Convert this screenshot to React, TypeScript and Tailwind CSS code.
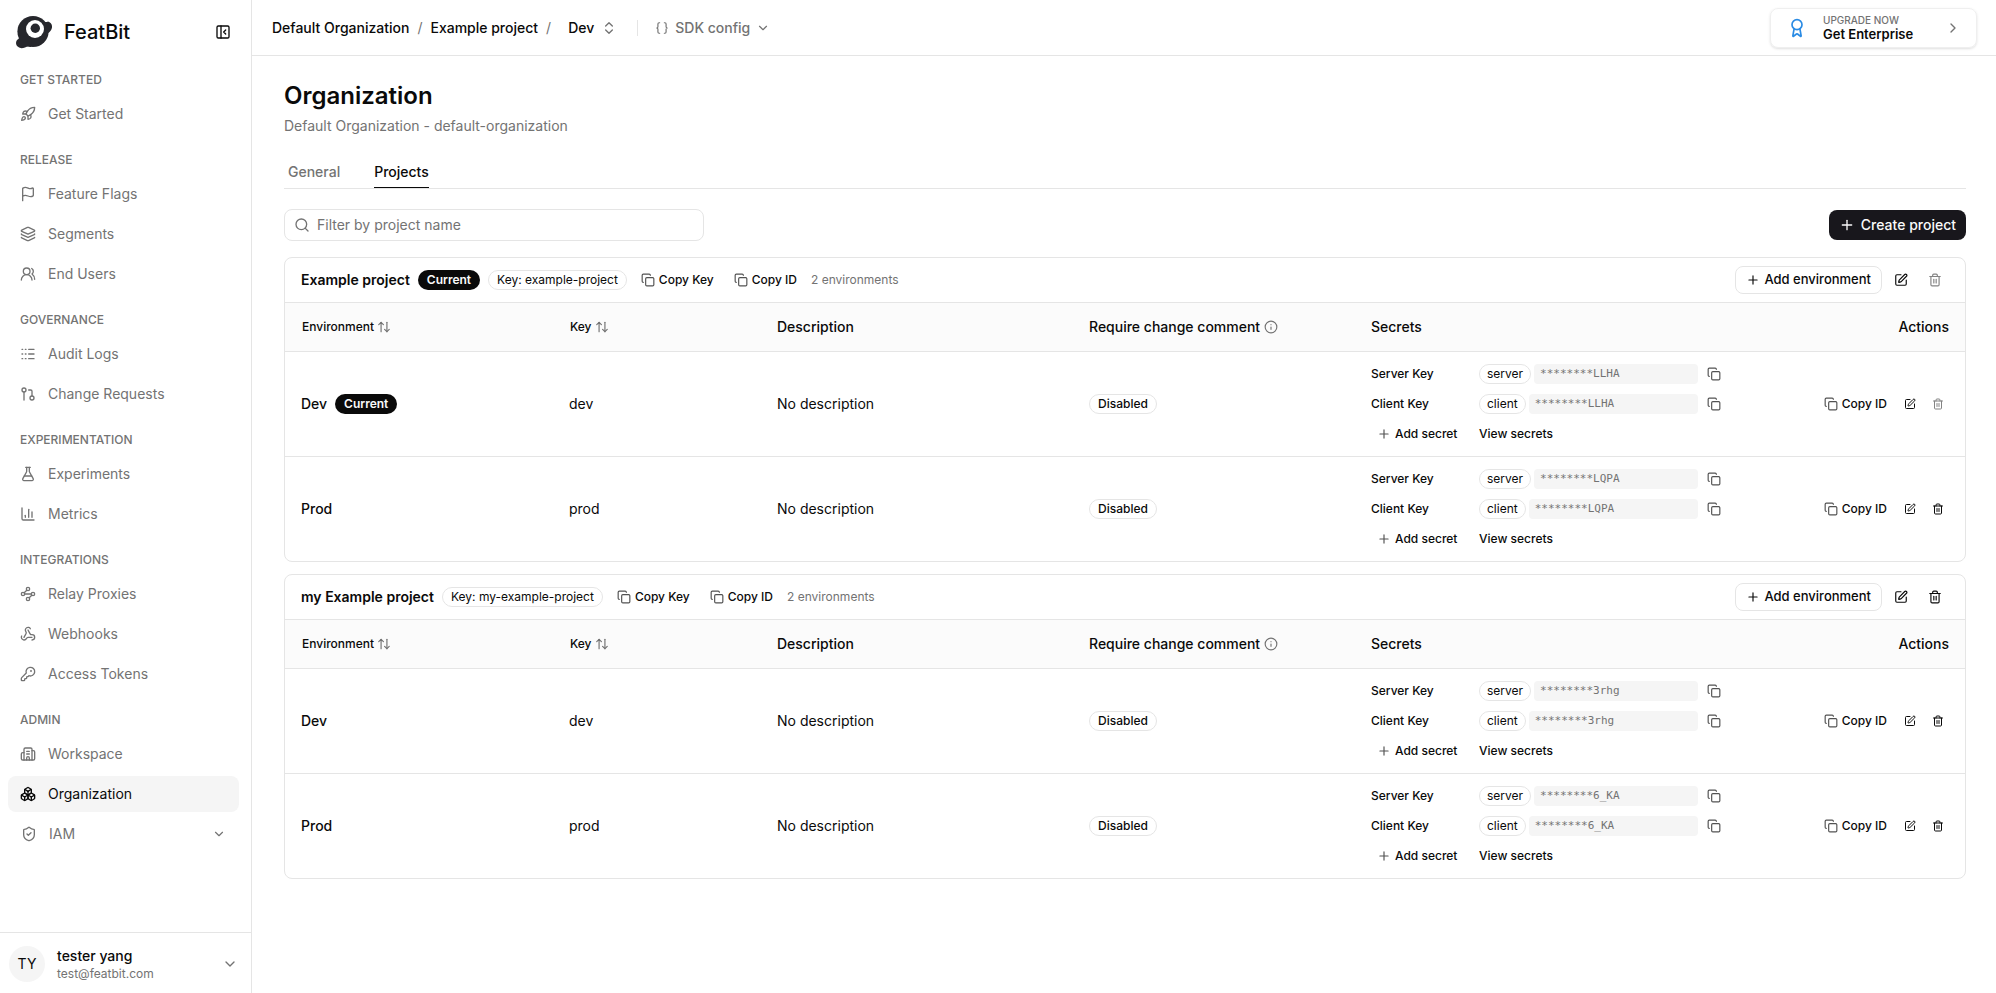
import {
  ArrowUpDown,
  Award,
  Boxes,
  Braces,
  Building2,
  ChartColumn,
  ChevronDown,
  ChevronRight,
  ChevronsUpDown,
  Copy,
  Flag,
  FlaskConical,
  GitPullRequest,
  Info,
  KeyRound,
  Layers,
  Logs,
  PanelLeftClose,
  Plus,
  Rocket,
  Search,
  ShieldCheck,
  SquarePen,
  Trash2,
  UsersRound,
  Waypoints,
  Webhook,
  type LucideIcon,
} from "lucide-react";
import { clsx } from "clsx";

type NavItem = { label: string; icon: LucideIcon; active?: boolean };
type NavSection = { title: string; items: NavItem[] };

const sections: NavSection[] = [
  { title: "Get Started", items: [{ label: "Get Started", icon: Rocket }] },
  {
    title: "Release",
    items: [
      { label: "Feature Flags", icon: Flag },
      { label: "Segments", icon: Layers },
      { label: "End Users", icon: UsersRound },
    ],
  },
  {
    title: "Governance",
    items: [
      { label: "Audit Logs", icon: Logs },
      { label: "Change Requests", icon: GitPullRequest },
    ],
  },
  {
    title: "Experimentation",
    items: [
      { label: "Experiments", icon: FlaskConical },
      { label: "Metrics", icon: ChartColumn },
    ],
  },
  {
    title: "Integrations",
    items: [
      { label: "Relay Proxies", icon: Waypoints },
      { label: "Webhooks", icon: Webhook },
      { label: "Access Tokens", icon: KeyRound },
    ],
  },
  {
    title: "Admin",
    items: [
      { label: "Workspace", icon: Building2 },
      { label: "Organization", icon: Boxes, active: true },
    ],
  },
];

type Environment = { name: string; key: string; secret: string; current?: boolean };
type Project = { name: string; key: string; current?: boolean; envs: Environment[] };

const projects: Project[] = [
  {
    name: "Example project",
    key: "example-project",
    current: true,
    envs: [
      { name: "Dev", key: "dev", secret: "********LLHA", current: true },
      { name: "Prod", key: "prod", secret: "********LQPA" },
    ],
  },
  {
    name: "my Example project",
    key: "my-example-project",
    envs: [
      { name: "Dev", key: "dev", secret: "********3rhg" },
      { name: "Prod", key: "prod", secret: "********6_KA" },
    ],
  },
];

function Logo() {
  return (
    <svg viewBox="0 0 36 34" className="h-[34px] w-9" aria-hidden="true">
      <g fill="#26272c">
        <circle cx="17" cy="16.5" r="15.6" />
        <path d="M25 6 Q30 8 32 6.4 Q36.4 7.6 36 12.6 Q35.4 16.4 31.6 18.4 L25 20Z" />
        <path d="M4 20 Q3.4 24 1 25 Q-1 28 1 31 Q4 34.4 9 32.4 Q12 31 15 32 L16 24Z" />
      </g>
      <circle cx="19" cy="14" r="9" fill="#fff" />
      <circle cx="19.3" cy="13.2" r="4.7" fill="#26272c" />
    </svg>
  );
}

function Sidebar() {
  return (
    <aside className="flex w-[252px] shrink-0 flex-col border-r border-neutral-200">
      <div className="flex h-16 items-center gap-3 pr-[19px] pl-4">
        <Logo />
        <span className="flex-1 text-xl font-medium">FeatBit</span>
        <button type="button" aria-label="Collapse sidebar" className="p-px">
          <PanelLeftClose className="size-4" />
        </button>
      </div>

      <nav className="flex flex-1 flex-col gap-5 pt-2 pr-3 pl-2">
        {sections.map((section) => (
          <div key={section.title}>
            <h2 className="mb-2 px-3 text-xs font-medium text-neutral-500 uppercase">{section.title}</h2>
            <ul className="flex flex-col gap-1">
              {section.items.map(({ label, icon: Icon, active }) => (
                <li key={label}>
                  <a
                    href="#"
                    className={clsx(
                      "flex h-9 items-center gap-3 rounded-lg px-3 text-sm",
                      active ? "bg-neutral-100 text-neutral-950" : "text-neutral-500",
                    )}
                  >
                    <Icon className="size-4" />
                    {label}
                  </a>
                </li>
              ))}
              {section.title === "Admin" && (
                <li>
                  <button
                    type="button"
                    className="flex h-9 w-full items-center gap-3 px-[13px] text-sm text-neutral-500"
                  >
                    <ShieldCheck className="size-4" />
                    <span className="flex-1 text-left">IAM</span>
                    <ChevronDown className="size-[14px]" />
                  </button>
                </li>
              )}
            </ul>
          </div>
        ))}
      </nav>

      <button
        type="button"
        className="flex h-[61px] items-center gap-3 border-t border-neutral-200 pt-[2px] pr-[13px] pl-[9px] text-left"
      >
        <span className="flex size-9 items-center justify-center rounded-full bg-neutral-100 text-sm">TY</span>
        <span className="flex-1">
          <span className="block text-sm leading-5 font-medium">tester yang</span>
          <span className="block text-xs text-neutral-500">test@featbit.com</span>
        </span>
        <ChevronDown className="size-4 text-neutral-500" />
      </button>
    </aside>
  );
}

function Header() {
  return (
    <header className="flex h-14 shrink-0 items-center border-b border-neutral-200 pr-[19px] pl-5 text-sm">
      <div className="flex items-center gap-2 font-medium">
        <a href="#">Default Organization</a>
        <span className="font-normal text-neutral-500">/</span>
        <a href="#">Example project</a>
        <span className="font-normal text-neutral-500">/</span>
        <button type="button" className="ml-[9px] flex items-center gap-[7px]">
          Dev
          <ChevronsUpDown className="size-4 text-neutral-500" />
        </button>
      </div>
      <span className="mr-[17px] ml-5 h-4 w-px bg-neutral-200" />
      <button type="button" className="flex items-center gap-[6px] font-medium text-neutral-500">
        <Braces className="size-[14px]" />
        SDK config
        <ChevronDown className="size-[14px]" />
      </button>

      <a
        href="#"
        className="ml-auto flex h-10 w-[207px] items-center rounded-lg border border-neutral-200/60 pr-[15px] pl-4 shadow-sm"
      >
        <Award className="size-5 text-[#2a8be4]" />
        <span className="ml-4 flex-1">
          <span className="block text-[10px] leading-3 font-medium text-neutral-500">UPGRADE NOW</span>
          <span className="block text-[13px] leading-4 font-semibold">Get Enterprise</span>
        </span>
        <ChevronRight className="size-4 text-neutral-500" />
      </a>
    </header>
  );
}

function CopyButton({ label }: { label: string }) {
  return (
    <button type="button" className="flex items-center gap-1 text-xs font-medium">
      <Copy className="size-[14px] text-neutral-600" />
      {label}
    </button>
  );
}

function CurrentBadge() {
  return (
    <span className="flex h-5 items-center rounded-full bg-neutral-950 px-[9px] text-xs font-semibold text-neutral-50">
      Current
    </span>
  );
}

function SecretRow({ label, type, value }: { label: string; type: string; value: string }) {
  return (
    <div className="flex h-5 items-center text-xs">
      <span className="w-[108px] font-medium">{label}</span>
      <span className="flex w-[219px] items-center gap-[3px]">
        <span className="flex h-5 items-center rounded-full border border-neutral-200 px-[7px]">{type}</span>
        <code className="h-5 flex-1 rounded-sm bg-neutral-100 px-[6px] font-['DejaVu_Sans_Mono',monospace] text-[11px] leading-5 text-neutral-500">
          {value}
        </code>
      </span>
      <button type="button" aria-label={`Copy ${label}`} className="ml-[9px]">
        <Copy className="size-[14px] text-neutral-600" />
      </button>
    </div>
  );
}

function SortHeader({ label }: { label: string }) {
  return (
    <button type="button" className="flex items-center gap-[3px] px-px text-xs font-medium">
      {label}
      <ArrowUpDown className="size-[14px] text-neutral-500" />
    </button>
  );
}

function EnvironmentRow({ env }: { env: Environment }) {
  return (
    <tr className="h-[105px] border-b border-neutral-200 last:border-b-0">
      <td className="px-4 font-medium">
        <div className="flex items-center gap-2">
          {env.name}
          {env.current && <CurrentBadge />}
        </div>
      </td>
      <td className="px-4">{env.key}</td>
      <td className="px-4">No description</td>
      <td className="px-4">
        <span className="inline-flex h-5 items-center rounded-full border border-neutral-200 px-2 text-xs font-medium">
          Disabled
        </span>
      </td>
      <td className="px-4">
        <div className="flex flex-col gap-[10px]">
          <SecretRow label="Server Key" type="server" value={env.secret} />
          <SecretRow label="Client Key" type="client" value={env.secret} />
          <div className="flex h-5 items-center text-xs font-medium">
            <button type="button" className="flex w-[108px] items-center gap-1 pl-[6px]">
              <Plus className="size-[14px] text-neutral-600" />
              Add secret
            </button>
            <button type="button">View secrets</button>
          </div>
        </div>
      </td>
      <td className="pr-5 pl-4">
        <div className="flex items-center justify-end">
          <CopyButton label="Copy ID" />
          <button type="button" aria-label="Edit environment" className="ml-4 p-px">
            <SquarePen className="size-3" />
          </button>
          <button
            type="button"
            aria-label="Delete environment"
            disabled={env.current}
            className="ml-[14px] p-px disabled:opacity-50"
          >
            <Trash2 className="size-3" />
          </button>
        </div>
      </td>
    </tr>
  );
}

function ProjectCard({ project }: { project: Project }) {
  return (
    <section className="overflow-hidden rounded-lg border border-neutral-200">
      <div className="flex h-[45px] items-center gap-2 border-b border-neutral-200 px-4">
        <h2 className="text-sm font-semibold">{project.name}</h2>
        {project.current && <CurrentBadge />}
        <span className="flex h-5 items-center rounded-full border border-neutral-200 px-2 text-xs">
          Key: {project.key}
        </span>
        <div className="flex items-center gap-5 pl-[6px]">
          <CopyButton label="Copy Key" />
          <CopyButton label="Copy ID" />
        </div>
        <span className="pl-[6px] text-xs text-neutral-500">{project.envs.length} environments</span>

        <button
          type="button"
          className="ml-auto flex h-7 items-center gap-1 rounded-lg border border-neutral-200 px-[10px] text-[13px] font-medium"
        >
          <Plus className="size-[14px]" />
          Add environment
        </button>
        <button type="button" aria-label="Edit project" className="p-1">
          <SquarePen className="size-[14px]" />
        </button>
        <button
          type="button"
          aria-label="Delete project"
          disabled={project.current}
          className="mr-[3px] ml-1 p-1 disabled:opacity-50"
        >
          <Trash2 className="size-[14px]" />
        </button>
      </div>

      <table className="w-full table-fixed border-collapse text-left text-sm">
        <thead>
          <tr className="h-12 border-b border-neutral-200 bg-[#fbfbfb]">
            <th className="w-[268px] px-4 font-medium">
              <SortHeader label="Environment" />
            </th>
            <th className="w-[208px] px-4 font-medium">
              <SortHeader label="Key" />
            </th>
            <th className="px-4 font-medium">Description</th>
            <th className="w-[282px] px-4 font-medium">
              <span className="flex items-center gap-1">
                Require change comment
                <Info className="size-[14px] text-neutral-500" />
              </span>
            </th>
            <th className="w-[400px] px-4 font-medium">Secrets</th>
            <th className="w-[210px] px-4 text-right font-medium">Actions</th>
          </tr>
        </thead>
        <tbody>
          {project.envs.map((env) => (
            <EnvironmentRow key={env.key} env={env} />
          ))}
        </tbody>
      </table>
    </section>
  );
}

export default function App() {
  return (
    <div className="flex min-h-screen bg-white font-[Inter,sans-serif] text-neutral-950">
      <Sidebar />
      <div className="flex min-w-0 flex-1 flex-col">
        <Header />
        <main className="flex flex-col pt-6 pr-[30px] pb-6 pl-8">
          <h1 className="text-2xl font-semibold">Organization</h1>
          <p className="mt-1 text-sm text-neutral-500">Default Organization - default-organization</p>

          <div className="mt-5 flex gap-[30px] border-b border-neutral-200 pl-1 text-sm font-medium">
            <button type="button" className="h-8 pr-1 text-neutral-500">
              General
            </button>
            <button type="button" className="h-8 border-b border-neutral-950">
              Projects
            </button>
          </div>

          <div className="mt-5 flex items-center justify-between">
            <label className="flex h-8 w-[420px] items-center gap-[7px] rounded-lg border border-neutral-200 px-[9px]">
              <Search className="size-4 text-neutral-500" />
              <input
                type="text"
                aria-label="Filter by project name"
                placeholder="Filter by project name"
                className="flex-1 text-sm outline-none placeholder:text-neutral-500"
              />
            </label>
            <button
              type="button"
              className="flex h-[30px] items-center gap-[6px] rounded-lg bg-[#18171c] px-[10px] text-sm font-medium text-neutral-50"
            >
              <Plus className="size-4" />
              Create project
            </button>
          </div>

          <div className="mt-4 flex flex-col gap-3">
            {projects.map((project) => (
              <ProjectCard key={project.key} project={project} />
            ))}
          </div>
        </main>
      </div>
    </div>
  );
}
